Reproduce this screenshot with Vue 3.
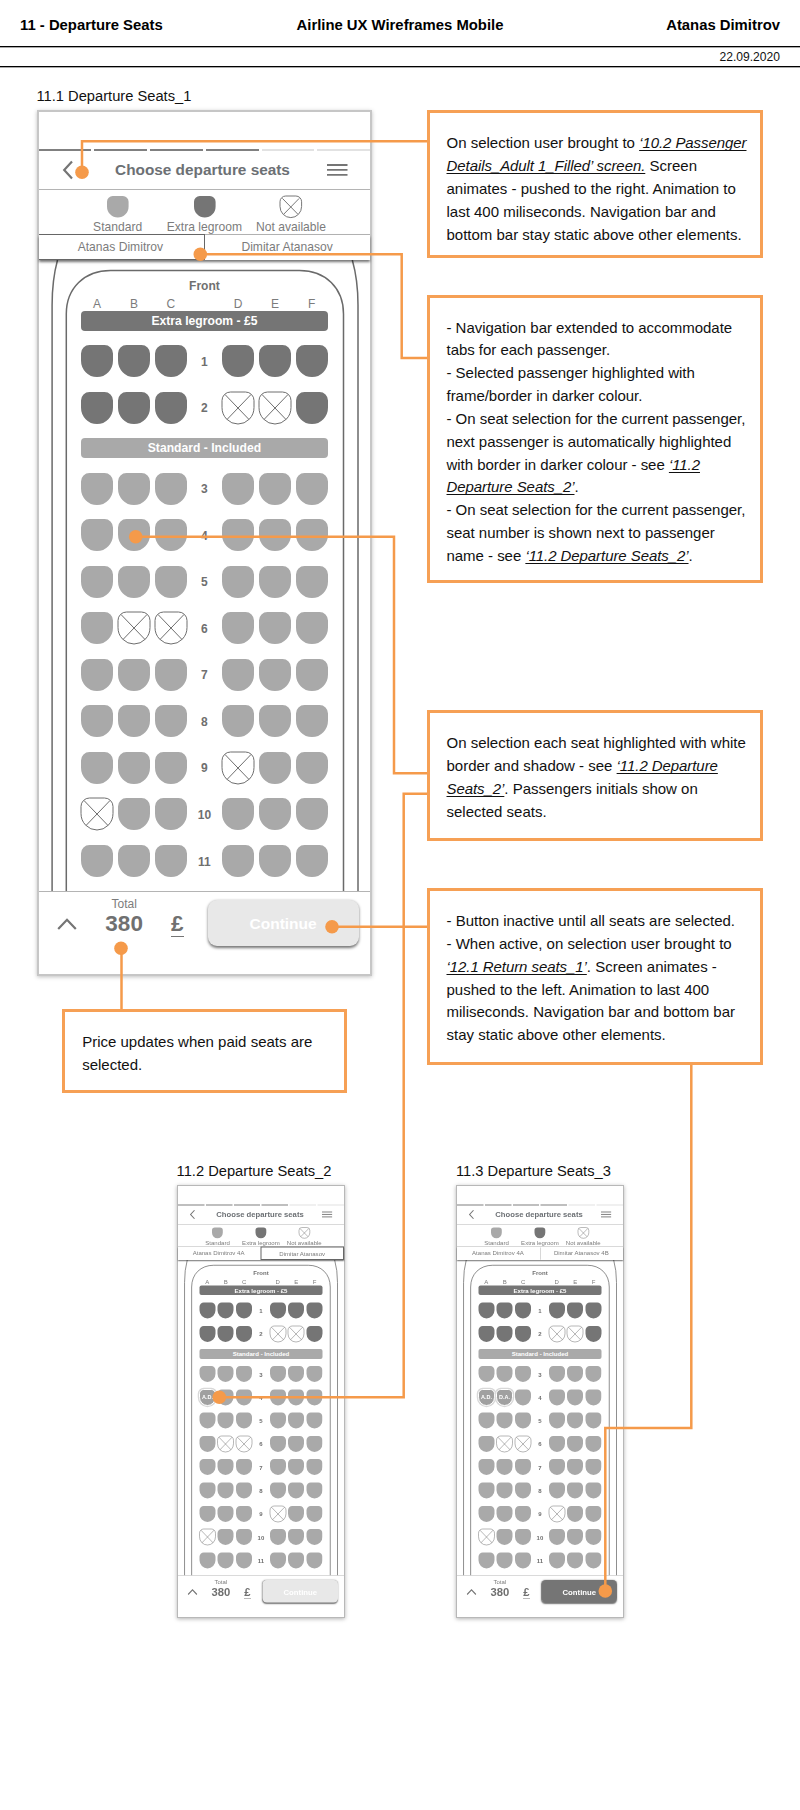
<script setup>
const blocked = ['2D', '2E', '6B', '6C', '9D', '10A']
const groups = [
  { kind: 'extra', title: 'Extra legroom - £5', rows: [1, 2] },
  { kind: 'standard', title: 'Standard - Included', rows: [3, 4, 5, 6, 7, 8, 9, 10, 11] },
]
const columns = ['A', 'B', 'C', '', 'D', 'E', 'F']
const seatPath = 'M8.500 0H23.500A8.500 8.500 0 0 1 32 8.500V15.500A16 16.500 0 0 1 0 15.500V8.500A8.500 8.500 0 0 1 8.500 0Z'
const legend = [
  { kind: 'standard', label: 'Standard' },
  { kind: 'extra', label: 'Extra legroom' },
  { kind: 'blocked', label: 'Not available' },
]

const screens = [
  { id: 's1', title: '11.1 Departure Seats_1', tabs: ['Atanas Dimitrov', 'Dimitar Atanasov'], current: 0, picked: {}, active: false },
  { id: 's2', title: '11.2 Departure Seats_2', tabs: ['Atanas Dimitrov 4A', 'Dimitar Atanasov'], current: 1, picked: { '4A': 'A.D.' }, active: false },
  { id: 's3', title: '11.3 Departure Seats_3', tabs: ['Atanas Dimitrov 4A', 'Dimitar Atanasov 4B'], current: -1, picked: { '4A': 'A.D.', '4B': 'D.A.' }, active: true },
]

// Each note line is a list of fragments; the second fragment is a screen reference.
const notes = [
  {
    id: 'n1',
    lines: [
      ['On selection user brought to ', '‘10.2 Passenger'],
      ['', 'Details_Adult 1_Filled’ screen.', ' Screen'],
      ['animates - pushed to the right. Animation to'],
      ['last 400 miliseconds. Navigation bar and'],
      ['bottom bar stay static above other elements.'],
    ],
  },
  {
    id: 'n2',
    lines: [
      ['- Navigation bar extended to accommodate'],
      ['tabs for each passenger.'],
      ['- Selected passenger highlighted with'],
      ['frame/border in darker colour.'],
      ['- On seat selection for the current passenger,'],
      ['next passenger is automatically highlighted'],
      ['with border in darker colour - see ', '‘11.2'],
      ['', 'Departure Seats_2’', '.'],
      ['- On seat selection for the current passenger,'],
      ['seat number is shown next to passenger'],
      ['name - see ', '‘11.2 Departure Seats_2’', '.'],
    ],
  },
  {
    id: 'n3',
    lines: [
      ['On selection each seat highlighted with white'],
      ['border and shadow - see ', '‘11.2 Departure'],
      ['', 'Seats_2’', '. Passengers initials show on'],
      ['selected seats.'],
    ],
  },
  {
    id: 'n4',
    lines: [
      ['- Button inactive until all seats are selected.'],
      ['- When active, on selection user brought to'],
      ['', '‘12.1 Return seats_1’', '. Screen animates -'],
      ['pushed to the left. Animation to last 400'],
      ['miliseconds. Navigation bar and bottom bar'],
      ['stay static above other elements.'],
    ],
  },
  { id: 'n5', lines: [['Price updates when paid seats are'], ['selected.']] },
]

const connectors = [
  { path: 'M82 172V141.300H428', dot: [82, 172.3] },
  { path: 'M200 254.300H401.700V358H428', dot: [200.3, 254.3] },
  { path: 'M136 536.700H394V773.300H428', dot: [135.7, 536.7] },
  { path: 'M219 1397.300H403.700V793.700H428', dot: [219.3, 1397.3] },
  { path: 'M332 926.700H428', dot: [332, 926.7] },
  { path: 'M121.500 948V1010', dot: [121, 948.3] },
  { path: 'M691.300 1063V1428H605.300V1591', dot: [605.3, 1591] },
]

function seatKind(screen, group, row, col) {
  const key = row + col
  if (screen.picked[key]) return 'picked'
  return blocked.includes(key) ? 'blocked' : group.kind
}
</script>

<template>
  <div class="page">
    <header class="head">
      <span>11 - Departure Seats</span>
      <span class="mid">Airline UX Wireframes Mobile</span>
      <span class="end">Atanas Dimitrov</span>
    </header>
    <div class="date">22.09.2020</div>

    <section v-for="s in screens" :key="s.id" class="screen" :class="s.id">
      <h2>{{ s.title }}</h2>
      <div class="phone">
        <div class="status"></div>
        <div class="progress"><i v-for="n in 6" :key="n" :class="{ done: n < 5 }"></i></div>
        <div class="nav">
          <svg class="back" width="12" height="20" viewBox="0 0 12 20"><path d="M10 1.500L2.200 10L10 18.500" /></svg>
          <span>Choose departure seats</span>
          <svg class="menu" width="21" height="14" viewBox="0 0 21 14"><path d="M0 2H20.500M0 6.900H20.500M0 11.800H20.500" /></svg>
        </div>
        <div class="legend">
          <div v-for="l in legend" :key="l.label" class="key">
            <svg class="seat" :class="l.kind" width="21.600" height="21.600" viewBox="0 0 32 32">
              <path :d="seatPath" />
              <path v-if="l.kind === 'blocked'" d="M3.500 3.500L26.500 27M28.500 3.500L5.500 27" />
            </svg>
            <span>{{ l.label }}</span>
          </div>
        </div>
        <div class="tabs">
          <div v-for="(t, i) in s.tabs" :key="t" class="tab" :class="{ current: s.current === i, split: s.current < 0 && i === 0 }">{{ t }}</div>
        </div>
        <div class="cabin">
          <svg class="hull" width="331.500" height="631" viewBox="0 0 331.500 631">
            <path d="M18.500 0Q13.100 20 13.100 45V631M313.300 0Q319 20 319 45V631" />
            <path d="M27.300 631V54C27.300 28 45.500 10.500 71.500 10.500H260.500C286.500 10.500 304.500 28 304.500 54V631" />
          </svg>
          <div class="plan">
            <div class="front">Front</div>
            <div class="grid letters"><span v-for="(c, i) in columns" :key="i">{{ c }}</span></div>
            <template v-for="g in groups" :key="g.kind">
              <div class="band" :class="g.kind">{{ g.title }}</div>
              <div v-for="r in g.rows" :key="r" class="grid">
                <template v-for="(c, i) in columns" :key="i">
                  <b v-if="!c">{{ r }}</b>
                  <svg v-else class="seat" :class="seatKind(s, g, r, c)" width="32" height="32" viewBox="0 0 32 32">
                    <path v-if="s.picked[r + c]" class="halo" :d="seatPath" />
                    <path :d="seatPath" />
                    <path v-if="seatKind(s, g, r, c) === 'blocked'" d="M3 2.500L27 27.500M29 2.500L5 27.500" />
                    <text v-if="s.picked[r + c]" x="16" y="18.200">{{ s.picked[r + c] }}</text>
                  </svg>
                </template>
              </div>
            </template>
          </div>
        </div>
        <div class="bottom">
          <svg class="up" width="20" height="12" viewBox="0 0 20 12"><path d="M1.200 11L10 1.800L18.800 11" /></svg>
          <div class="total"><span>Total</span><strong>380</strong></div>
          <div class="pound">£</div>
          <div class="cta" :class="{ active: s.active }">Continue</div>
        </div>
      </div>
    </section>

    <svg class="wires" width="800" height="1810" viewBox="0 0 800 1810">
      <g v-for="c in connectors" :key="c.path">
        <path :d="c.path" />
        <circle :cx="c.dot[0]" :cy="c.dot[1]" r="6.800" />
      </g>
    </svg>

    <aside v-for="n in notes" :key="n.id" class="note" :class="n.id">
      <p v-for="(line, i) in n.lines" :key="i"><template v-for="(t, j) in line" :key="j"><em v-if="j === 1">{{ t }}</em><template v-else>{{ t }}</template></template></p>
    </aside>
  </div>
</template>

<style>
body {
  margin: 0;
  background: #fff;
}
</style>

<style scoped>
.page {
  position: relative;
  width: 800px;
  height: 1810px;
  overflow: hidden;
  background: #fff;
  color: #111;
  font-family: "Liberation Sans", Arial, sans-serif;
}
.head {
  box-sizing: border-box;
  height: 47px;
  padding: 16px 20px 0;
  display: grid;
  grid-template-columns: 1fr auto 1fr;
  border-bottom: 1px solid #000;
  box-shadow: 0 1px 0 #aaa;
  font-size: 14.85px;
  line-height: 18px;
  font-weight: 700;
  color: #000;
}
.end {
  text-align: right;
}
.date {
  box-sizing: border-box;
  height: 20px;
  padding-right: 20px;
  border-bottom: 1px solid #000;
  box-shadow: 0 1px 0 #aaa;
  text-align: right;
  font-size: 12.1px;
  line-height: 20px;
}
.screen {
  position: absolute;
}
.s1 { left: 36.5px; top: 84px; }
.s2 { left: 176.6px; top: 1158.6px; }
.s3 { left: 456px; top: 1158.6px; }
h2 {
  margin: 0;
  height: 26.4px;
  font-size: 14.7px;
  line-height: 24.5px;
  font-weight: 400;
  white-space: nowrap;
  color: #111;
}
.phone {
  box-sizing: border-box;
  width: 335.5px;
  height: 865.5px;
  border: 2px solid #c6c6c6;
  box-shadow: 0 1px 4px rgba(0, 0, 0, 0.25);
  background: #fff;
  display: flex;
  flex-direction: column;
  color: #7c7c7c;
  font-size: 12px;
  transform-origin: 0 0;
}
.s2 .phone,
.s3 .phone {
  transform: scale(0.5);
  border-color: #b8b8b8;
  box-shadow: 0 2px 8px rgba(0, 0, 0, 0.3);
}
.status { height: 37px; }
.progress {
  display: flex;
  gap: 3px;
  height: 1.6px;
}
.progress i {
  flex: 1;
  background: #e2e2e2;
}
.progress i.done { background: #808080; }
.nav {
  box-sizing: border-box;
  height: 38.7px;
  padding: 0 22.5px 0 23px;
  border-bottom: 1px solid #b4b4b4;
  display: flex;
  align-items: center;
  justify-content: space-between;
  font-size: 15.35px;
  font-weight: 700;
  color: #6c7074;
}
svg { display: block; }
.nav path,
.up path {
  fill: none;
  stroke: #757575;
  stroke-width: 2.2;
}
.nav .menu path { stroke-width: 1.8; }
.nav span { margin-left: 5px; }
.legend {
  box-sizing: border-box;
  height: 45.2px;
  padding: 5.9px 0 0 35.8px;
  border-bottom: 1px solid #b4b4b4;
  display: flex;
}
.key {
  width: 86.7px;
  display: flex;
  flex-direction: column;
  align-items: center;
  gap: 2.6px;
  font-size: 12.1px;
  line-height: 14px;
  white-space: nowrap;
}
.tabs {
  height: 25.2px;
  display: flex;
  position: relative;
  box-shadow: 0 1.5px 2.5px rgba(0, 0, 0, 0.55);
  background: #fff;
}
.tab {
  box-sizing: border-box;
  flex: 1;
  text-align: center;
  line-height: 23.5px;
  font-size: 12.1px;
  border: 1px solid transparent;
  border-left-width: 0;
  white-space: nowrap;
}
.tab:first-child { padding-right: 2px; }
.tab.current {
  border-color: #666;
  margin-top: -1.2px;
  line-height: 25.8px;
}
.tab:last-child.current { border-left: 1px solid #666; }
.s2 .tab.current { border-width: 2px; line-height: 24.5px; }
.tab.split { border-right-color: #b0b0b0; }
.cabin {
  height: 631px;
  display: grid;
}
.hull,
.plan { grid-area: 1 / 1; }
.hull path {
  fill: none;
  stroke: #6a6a6a;
  stroke-width: 1.5;
}
.plan {
  padding: 19.3px 0 0 42.6px;
  width: 246.7px;
  display: flex;
  flex-direction: column;
  gap: 14.55px;
}
.front {
  text-align: center;
  font-weight: 700;
  line-height: 14px;
  color: #707070;
  margin-bottom: -11.35px;
}
.grid {
  display: grid;
  grid-template-columns: 32px 32px 32px 25.6px 32px 32px 32px;
  column-gap: 4.85px;
  height: 32px;
  align-items: center;
  text-align: center;
}
.grid b {
  color: #6f6f6f;
  padding-top: 1px;
}
.letters {
  height: 14px;
  line-height: 14px;
  margin-bottom: -13.85px;
}
.band {
  height: 19.6px;
  line-height: 20.8px;
  border-radius: 4px;
  text-align: center;
  font-weight: 700;
  font-size: 12.15px;
  color: #fff;
}
.band.extra { background: #757575; }
.band.standard { background: #a9a9a9; }
.seat { overflow: visible; }
.seat.extra { fill: #757575; }
.seat.standard { fill: #a9a9a9; }
.seat.blocked {
  fill: none;
  stroke: #6e6e6e;
  stroke-width: 1;
}
.key .seat.blocked { stroke-width: 1.4; }
.seat.picked path {
  fill: #a0a0a0;
  stroke: #fff;
  stroke-width: 2;
}
.seat.picked .halo {
  fill: #d8d8d8;
  stroke: #d8d8d8;
  stroke-width: 7;
}
.seat text {
  fill: #fff;
  font-size: 11px;
  font-weight: 700;
  text-anchor: middle;
}
.bottom {
  box-sizing: border-box;
  flex: 1;
  border-top: 1px solid #b4b4b4;
  display: flex;
  align-items: flex-start;
}
.up { margin: 26px 0 0 18.8px; }
.total {
  margin: 5.3px 0 0 26.6px;
  width: 40.5px;
  display: flex;
  flex-direction: column;
  align-items: center;
  line-height: 14px;
}
.total strong {
  font-size: 22.5px;
  line-height: 25.6px;
  color: #707070;
}
.pound {
  margin: 20px 0 0 26.2px;
  width: 13.5px;
  height: 24px;
  border-bottom: 1px solid #757575;
  text-align: center;
  font-size: 22.5px;
  line-height: 24.5px;
  font-weight: 700;
  color: #707070;
}
.cta {
  box-sizing: border-box;
  margin: 8.2px 0 0 23.5px;
  width: 151px;
  height: 45.5px;
  padding-top: 14.8px;
  border-radius: 9px;
  background: #e8e8e8;
  box-shadow: 0 1.5px 3px rgba(0, 0, 0, 0.55);
  text-align: center;
  font-size: 15.5px;
  line-height: 18px;
  font-weight: 700;
  color: #fff;
}
.cta.active { background: #757575; }
.wires {
  position: absolute;
  left: 0;
  top: 0;
}
.wires path {
  fill: none;
  stroke: #f59a4a;
  stroke-width: 2.5;
}
.wires circle { fill: #f59a4a; }
.note {
  position: absolute;
  box-sizing: border-box;
  left: 426.5px;
  width: 336.2px;
  padding: 19px 0 0 17px;
  border: 3px solid #f6a055;
  background: #fff;
  font-size: 15px;
  line-height: 22.85px;
  white-space: pre;
}
.n1 { top: 110.3px; height: 147.7px; }
.n2 { top: 294.5px; height: 288.9px; letter-spacing: -0.03px; }
.n3 { top: 710.3px; height: 130.4px; }
.n4 { top: 888px; height: 176.7px; }
.n5 { left: 62.2px; top: 1008.7px; width: 284.6px; height: 84.3px; }
.note p { margin: 0; }
.note em {
  letter-spacing: -0.07px;
  text-decoration: underline;
  text-decoration-thickness: 1px;
  text-decoration-skip-ink: none;
  text-underline-offset: 2px;
}
</style>
